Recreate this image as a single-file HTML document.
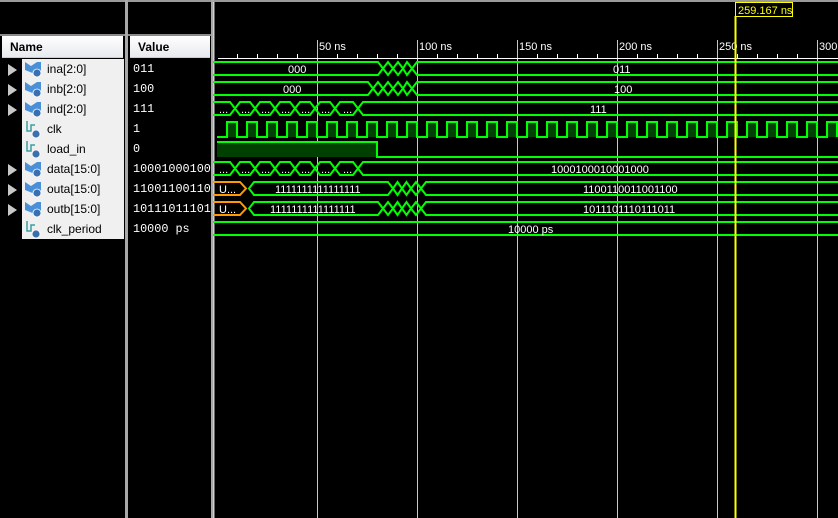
<!DOCTYPE html>
<html><head><meta charset="utf-8"><style>
html,body{margin:0;padding:0;background:#000;width:838px;height:518px;overflow:hidden;font-family:"Liberation Sans",sans-serif}
.abs{position:absolute}
.hdr{position:absolute;top:36px;height:22px;background:linear-gradient(#ffffff,#e8eaee);font-weight:bold;font-size:12px;line-height:22px;color:#000;border-bottom:1px solid #ccc}
.row{position:absolute;height:20px;line-height:20px;font-size:12px;color:#000}
.val{position:absolute;left:133px;font-family:"Liberation Mono",monospace;font-size:11.8px;color:#fff;height:20px;line-height:20px}
.arr{position:absolute;left:8px;width:0;height:0;border-left:9px solid #c8c8c8;border-top:6px solid transparent;border-bottom:6px solid transparent}
</style></head><body>
<div class="abs" style="left:0;top:0;width:838px;height:2px;background:#9a9a9a"></div>
<div class="abs" style="left:125px;top:0;width:3px;height:518px;background:#a8a8a8"></div>
<div class="abs" style="left:211px;top:0;width:3px;height:518px;background:#a8a8a8"></div>
<div class="abs" style="left:0;top:34px;width:125px;height:2px;background:#8a8a8a"></div>
<div class="abs" style="left:128px;top:34px;width:83px;height:2px;background:#8a8a8a"></div>
<div class="hdr" style="left:2px;width:121px;padding-left:8px;box-sizing:border-box">Name</div>
<div class="hdr" style="left:130px;width:80px;padding-left:8px;box-sizing:border-box">Value</div>
<div class="abs" style="left:22px;top:59px;width:102px;height:180px;background:#f0f0f0"></div>

<svg class="abs" style="left:0;top:0" width="125" height="240">
<defs>
<g id="bus"><path d="M0 2 L6 6 L12 2 L16 2 L16 12 L10 14 L0 10 Z" fill="#4a90d9"/><circle cx="12" cy="13" r="4" fill="#3a70b0" stroke="#fff" stroke-width="0.8"/></g>
<g id="bit"><path d="M2 0 V10 H6 V4 H10" fill="none" stroke="#3aa0a0" stroke-width="1.5"/><circle cx="11" cy="13" r="4" fill="#3a70b0" stroke="#fff" stroke-width="0.8"/></g>
</defs>
<use href="#bus" x="25" y="60"/><use href="#bus" x="25" y="80"/><use href="#bus" x="25" y="100"/>
<use href="#bit" x="25" y="121"/><use href="#bit" x="25" y="141"/>
<use href="#bus" x="25" y="160"/><use href="#bus" x="25" y="180"/><use href="#bus" x="25" y="200"/>
<use href="#bit" x="25" y="221"/>
</svg>
<div class="arr" style="top:64px"></div><div class="arr" style="top:84px"></div><div class="arr" style="top:104px"></div>
<div class="arr" style="top:164px"></div><div class="arr" style="top:184px"></div><div class="arr" style="top:204px"></div>
<div class="row" style="left:47px;top:59px">ina[2:0]</div>
<div class="row" style="left:47px;top:79px">inb[2:0]</div>
<div class="row" style="left:47px;top:99px">ind[2:0]</div>
<div class="row" style="left:47px;top:119px">clk</div>
<div class="row" style="left:47px;top:139px">load_in</div>
<div class="row" style="left:47px;top:159px">data[15:0]</div>
<div class="row" style="left:47px;top:179px">outa[15:0]</div>
<div class="row" style="left:47px;top:199px">outb[15:0]</div>
<div class="row" style="left:47px;top:219px">clk_period</div>

<div class="val" style="top:59px">011</div>
<div class="val" style="top:79px">100</div>
<div class="val" style="top:99px">111</div>
<div class="val" style="top:119px">1</div>
<div class="val" style="top:139px">0</div>
<div class="val" style="top:159px">10001000100</div>
<div class="val" style="top:179px">11001100110</div>
<div class="val" style="top:199px">10111011101</div>
<div class="val" style="top:219px">10000 ps</div>

<svg class="abs" style="left:0;top:0" width="838" height="518" font-family="Liberation Sans, sans-serif" font-size="11">
<rect x="213" y="2" width="1.5" height="516" fill="#d0d0d0"/>
<g stroke="#c8c8c8" stroke-width="1">
<line x1="317.5" y1="40" x2="317.5" y2="518"/><line x1="417.5" y1="40" x2="417.5" y2="518"/>
<line x1="517.5" y1="40" x2="517.5" y2="518"/><line x1="617.5" y1="40" x2="617.5" y2="518"/>
<line x1="717.5" y1="40" x2="717.5" y2="518"/><line x1="817.5" y1="40" x2="817.5" y2="518"/>
</g>
<g fill="#fff" font-size="11">
<text x="319" y="50">50 ns</text><text x="419" y="50">100 ns</text><text x="519" y="50">150 ns</text>
<text x="619" y="50">200 ns</text><text x="719" y="50">250 ns</text><text x="819" y="50">300 ns</text>
</g>
<line x1="218" y1="58.5" x2="838" y2="58.5" stroke="#fff"/>
<path stroke="#fff" d="M237.5 54V58M257.5 54V58M277.5 54V58M297.5 54V58M337.5 54V58M357.5 54V58M377.5 54V58M397.5 54V58M437.5 54V58M457.5 54V58M477.5 54V58M497.5 54V58M537.5 54V58M557.5 54V58M577.5 54V58M597.5 54V58M637.5 54V58M657.5 54V58M677.5 54V58M697.5 54V58M737.5 54V58M757.5 54V58M777.5 54V58M797.5 54V58"/>

<g fill="none" stroke="#00ff00" stroke-width="2">
<path d="M213 62H378L383 68.5L378 75H213 M383 68.5L388 62H388L393 68.5L388 75L383 68.5 M393 68.5L398 62L403 68.5L398 75Z M403 68.5L407 62L412 68.5L407 75Z M412 68.5L417 62H845 M412 68.5L417 75H845"/>
<path d="M213 82H368L373 88.5L368 95H213 M373 88.5L378 82L383 88.5L378 95Z M383 88.5L388 82L393 88.5L388 95Z M393 88.5L398 82L403 88.5L398 95Z M403 88.5L407 82L412 88.5L407 95Z M412 88.5L417 82H845 M412 88.5L417 95H845"/>
<path d="M213 102H230L235 108.5L230 115H213 M235 108.5L240 102H250L255 108.5L250 115H240Z M255 108.5L260 102H270L275 108.5L270 115H260Z M275 108.5L280 102H290L295 108.5L290 115H280Z M295 108.5L300 102H310L315 108.5L310 115H300Z M315 108.5L320 102H330L335 108.5L330 115H320Z M335 108.5L340 102H353L358 108.5L353 115H340Z M358 108.5L363 102H845 M358 108.5L363 115H845"/>
<path d="M213 162H230L235 168.5L230 175H213 M235 168.5L240 162H250L255 168.5L250 175H240Z M255 168.5L260 162H270L275 168.5L270 175H260Z M275 168.5L280 162H290L295 168.5L290 175H280Z M295 168.5L300 162H310L315 168.5L310 175H300Z M315 168.5L320 162H330L335 168.5L330 175H320Z M335 168.5L340 162H353L358 168.5L353 175H340Z M358 168.5L363 162H845 M358 168.5L363 175H845"/>
<path d="M249 188.5L254 182H388L393 188.5L388 195H254Z M393 188.5L397.5 182L402 188.5L397.5 195Z M402 188.5L406.5 182L411 188.5L406.5 195Z M411 188.5L416 182L421 188.5L416 195Z M421 188.5L426 182H845 M421 188.5L426 195H845"/>
<path d="M249 208.5L254 202H378L383 208.5L378 215H254Z M383 208.5L388 202L393 208.5L388 215Z M393 208.5L397.5 202L402 208.5L397.5 215Z M402 208.5L406.5 202L411 208.5L406.5 215Z M411 208.5L416 202L421 208.5L416 215Z M421 208.5L426 202H845 M421 208.5L426 215H845"/>
<path d="M213 222H845M213 235H845"/>
</g>
<g fill="none" stroke="#ff9900" stroke-width="2">
<path d="M213 182H240L246 188.5L240 195H213"/>
<path d="M213 202H240L246 208.5L240 215H213"/>
</g>
<g fill="#004000">
<rect x="227" y="122" width="10" height="15"/><rect x="247" y="122" width="10" height="15"/><rect x="267" y="122" width="10" height="15"/><rect x="287" y="122" width="10" height="15"/><rect x="307" y="122" width="10" height="15"/><rect x="327" y="122" width="10" height="15"/><rect x="347" y="122" width="10" height="15"/><rect x="367" y="122" width="10" height="15"/><rect x="387" y="122" width="10" height="15"/><rect x="407" y="122" width="10" height="15"/><rect x="427" y="122" width="10" height="15"/><rect x="447" y="122" width="10" height="15"/><rect x="467" y="122" width="10" height="15"/><rect x="487" y="122" width="10" height="15"/><rect x="507" y="122" width="10" height="15"/><rect x="527" y="122" width="10" height="15"/><rect x="547" y="122" width="10" height="15"/><rect x="567" y="122" width="10" height="15"/><rect x="587" y="122" width="10" height="15"/><rect x="607" y="122" width="10" height="15"/><rect x="627" y="122" width="10" height="15"/><rect x="647" y="122" width="10" height="15"/><rect x="667" y="122" width="10" height="15"/><rect x="687" y="122" width="10" height="15"/><rect x="707" y="122" width="10" height="15"/><rect x="727" y="122" width="10" height="15"/><rect x="747" y="122" width="10" height="15"/><rect x="767" y="122" width="10" height="15"/><rect x="787" y="122" width="10" height="15"/><rect x="807" y="122" width="10" height="15"/><rect x="827" y="122" width="10" height="15"/>
<rect x="217" y="142" width="160" height="15"/>
</g>
<path fill="none" stroke="#00ff00" stroke-width="2" d="M217 137H227V122H237V137H247V122H257V137H267V122H277V137H287V122H297V137H307V122H317V137H327V122H337V137H347V122H357V137H367V122H377V137H387V122H397V137H407V122H417V137H427V122H437V137H447V122H457V137H467V122H477V137H487V122H497V137H507V122H517V137H527V122H537V137H547V122H557V137H567V122H577V137H587V122H597V137H607V122H617V137H627V122H637V137H647V122H657V137H667V122H677V137H687V122H697V137H707V122H717V137H727V122H737V137H747V122H757V137H767V122H777V137H787V122H797V137H807V122H817V137H827V122H837V137"/>
<path fill="none" stroke="#00ff00" stroke-width="2" d="M217 142H377V157H845"/>

<g fill="#fff" font-size="11">
<text x="288" y="73">000</text><text x="613" y="73">011</text>
<text x="283" y="93">000</text><text x="614" y="93">100</text>
<text x="219" y="113">...</text><text x="241" y="113">...</text><text x="261" y="113">...</text><text x="281" y="113">...</text><text x="301" y="113">...</text><text x="321" y="113">...</text><text x="343" y="113">...</text>
<text x="590" y="113">111</text>
<text x="219" y="173">...</text><text x="241" y="173">...</text><text x="261" y="173">...</text><text x="281" y="173">...</text><text x="301" y="173">...</text><text x="321" y="173">...</text><text x="343" y="173">...</text>
<text x="551" y="173">1000100010001000</text>
<text x="219" y="193">U...</text><text x="275" y="193">1111111111111111</text><text x="583" y="193">1100110011001100</text>
<text x="219" y="213">U...</text><text x="270" y="213">1111111111111111</text><text x="583" y="213">1011101110111011</text>
<text x="508" y="233">10000 ps</text>
</g>
<rect x="734.5" y="16" width="2" height="502" fill="#ffff00"/>
<rect x="735.5" y="2.5" width="57" height="14" fill="#000" stroke="#ffff00"/>
<text x="738" y="14" fill="#ffff00" font-size="11">259.167 ns</text>
</svg>
</body></html>
